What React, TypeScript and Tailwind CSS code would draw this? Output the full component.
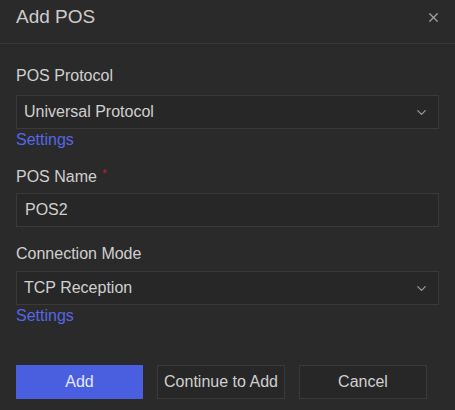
import { X, ChevronDown } from 'lucide-react';

function SelectBox({ value }: { value: string }) {
    return (
        <div className="flex h-[34px] items-center justify-between border border-[#3a3a3a] bg-[#272727] pl-[7px] pr-[9px] text-[16px] text-[#d0d0d0]">
            <span>{value}</span>
            <ChevronDown className="h-[15px] w-[15px] text-[#9a9a9a]" strokeWidth={2} />
        </div>
    );
}

function SettingsLink() {
    return <a className="mt-[1px] block h-[20px] text-[16px] leading-[20px] text-[#5567e6]">Settings</a>;
}

export default function App() {
    return (
        <div className="h-[410px] w-[455px] bg-[#2a2a2a]" style={{ fontFamily: '"Liberation Sans", Arial, sans-serif' }}>
            {/* header */}
            <div className="flex h-[44px] items-center justify-between border-b border-[#363636] pl-4 pr-[14px]">
                <h1 className="pb-[8px] text-[19px] text-[#cccccc]">Add POS</h1>
                <X className="mb-[8px] h-[15px] w-[15px] text-[#a0a0a0]" strokeWidth={2} />
            </div>

            <div className="px-4 pt-[22px]">
                <div className="h-[20px] text-[16px] leading-[20px] text-[#d0d0d0]">POS Protocol</div>
                <div className="mt-[9px]">
                    <SelectBox value="Universal Protocol" />
                </div>
                <SettingsLink />

                <div className="mt-[17px] flex h-[20px] items-start text-[16px] leading-[20px] text-[#d0d0d0]">
                    POS Name
                    <span className="ml-[5px] text-[13px] leading-[14px] text-[#b0203a]">*</span>
                </div>
                <div className="mt-[6px] flex h-[34px] items-center border border-[#3a3a3a] bg-[#272727] pl-[8px] text-[16px] text-[#d0d0d0]">
                    POS2
                </div>

                <div className="mt-[17px] h-[20px] text-[16px] leading-[20px] text-[#d0d0d0]">Connection Mode</div>
                <div className="mt-[7px]">
                    <SelectBox value="TCP Reception" />
                </div>
                <SettingsLink />

                {/* footer buttons */}
                <div className="mt-[39px] flex gap-[14px]">
                    <button className="h-[34px] w-[127px] bg-[#4a5fe0] text-[16px] text-[#e4e8ff]">Add</button>
                    <button className="h-[34px] w-[128px] border border-[#3a3a3a] bg-[#272727] text-[16px] text-[#d0d0d0]">Continue to Add</button>
                    <button className="h-[34px] w-[128px] border border-[#3a3a3a] bg-[#272727] text-[16px] text-[#d0d0d0]">Cancel</button>
                </div>
            </div>
        </div>
    );
}
